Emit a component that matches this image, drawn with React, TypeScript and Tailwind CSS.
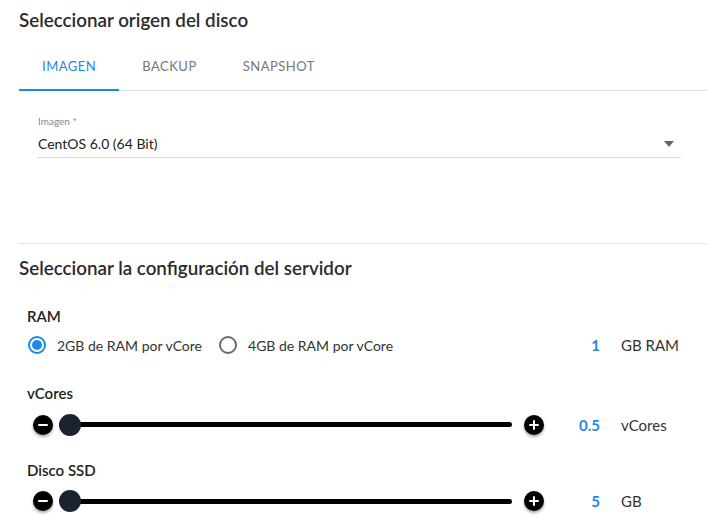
import React from "react";

function RoundButton({ plus }: { plus?: boolean }) {
  return (
    <div className="w-5 h-5 rounded-full bg-black flex items-center justify-center shadow-[0_2px_3px_rgba(0,0,0,0.35)] shrink-0">
      <svg width="12" height="12" viewBox="0 0 12 12">
        <path d="M2 6h8" stroke="white" strokeWidth="2" strokeLinecap="round" />
        {plus && <path d="M6 2v8" stroke="white" strokeWidth="2" strokeLinecap="round" />}
      </svg>
    </div>
  );
}

function Slider() {
  return (
    <div className="flex items-center ml-[6px] mr-[12px]">
      <RoundButton />
      <div className="relative flex-1 h-[22px] ml-[6px] mr-[12px] flex items-center">
        <div className="absolute left-[11px] right-0 h-[5px] rounded-full bg-black" />
        <div className="relative w-[22px] h-[22px] rounded-full bg-[#1b2330]" />
      </div>
      <RoundButton plus />
    </div>
  );
}

function Row({ children, value, unit }: { children: React.ReactNode; value: string; unit: string }) {
  return (
    <div className="flex items-center">
      <div className="flex-1">{children}</div>
      <div className="w-[44px] text-right text-[#1e88e5] text-[15px] font-bold">{value}</div>
      <div className="ml-[21px] w-[70px] text-[15px] text-[#333]">{unit}</div>
    </div>
  );
}

function Radio({ checked, label }: { checked?: boolean; label: string }) {
  return (
    <div className="flex items-center">
      <div
        className={
          checked
            ? "w-[18px] h-[18px] rounded-full border-2 border-[#1e88e5] flex items-center justify-center"
            : "w-[18px] h-[18px] rounded-full border-2 border-[#6b6b6b]"
        }
      >
        {checked && <div className="w-[10px] h-[10px] rounded-full bg-[#1e88e5]" />}
      </div>
      <span className="ml-[11px] text-[14px] text-[#333]">{label}</span>
    </div>
  );
}

export default function App() {
  return (
    <div className="w-[707px] h-[529px] bg-white overflow-hidden font-['Lato',sans-serif]">
      <div className="pl-[19px]">
        <h2 className="pt-2 h-8 text-[18.8px] leading-6 font-semibold text-[#2b2b2b]">
          Seleccionar origen del disco
        </h2>

        {/* tabs */}
        <div className="mt-[11px] flex border-b border-[#e0e0e0]">
          <div className="relative px-[23px] h-[47px] flex items-center text-[13px] tracking-[0.5px] text-[#1e88e5]">
            IMAGEN
            <div className="absolute left-0 right-0 -bottom-[1px] h-[2px] bg-[#1e88e5]" />
          </div>
          <div className="px-[23px] h-[47px] flex items-center text-[13px] tracking-[0.5px] text-[#777]">BACKUP</div>
          <div className="px-[23px] h-[47px] flex items-center text-[13px] tracking-[0.5px] text-[#777]">SNAPSHOT</div>
        </div>

        {/* select */}
        <div className="ml-[19px] w-[643px] mt-[22px]">
          <div className="text-[10px] leading-4 text-[#888]">Imagen *</div>
          <div className="flex items-center justify-between h-[26px] border-b border-[#d8d8d8] pb-[2px] mt-[3px]">
            <span className="text-[14px] text-[#222]">CentOS 6.0 (64 Bit)</span>
            <svg width="10" height="6" viewBox="0 0 10 6" className="mr-[7px]">
              <path d="M0 0h10L5 6z" fill="#666" />
            </svg>
          </div>
        </div>

        <div className="mt-[85px] border-t border-[#e2e2e2]" />

        <h2 className="mt-[12px] h-6 text-[18.8px] leading-6 font-semibold text-[#2b2b2b]">
          Seleccionar la configuración del servidor
        </h2>
      </div>

      <div className="pl-[27px] pr-[16px] mt-[26px]">
        <div className="text-[15px] font-semibold text-[#222] leading-5">RAM</div>
        <div className="mt-[8px]">
          <Row value="1" unit="GB RAM">
            <div className="flex items-center pl-[1px]">
              <Radio checked label="2GB de RAM por vCore" />
              <div className="ml-[17px]">
                <Radio label="4GB de RAM por vCore" />
              </div>
            </div>
          </Row>
        </div>

        <div className="mt-[26px] text-[15px] font-semibold text-[#222] leading-5">vCores</div>
        <div className="mt-[11px]">
          <Row value="0.5" unit="vCores">
            <Slider />
          </Row>
        </div>

        <div className="mt-[24px] text-[15px] font-semibold text-[#222] leading-5">Disco SSD</div>
        <div className="mt-[10px]">
          <Row value="5" unit="GB">
            <Slider />
          </Row>
        </div>
      </div>
    </div>
  );
}
